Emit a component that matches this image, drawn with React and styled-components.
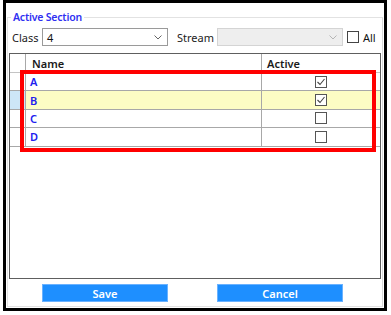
import React from "react";
import styled, { createGlobalStyle } from "styled-components";

const Global = createGlobalStyle`
  body {
    margin: 0;
    background: #fff;
    font-family: "Noto Sans", "Open Sans", sans-serif;
  }
`;

const Frame = styled.div`
  position: relative;
  box-sizing: border-box;
  width: 384px;
  height: 311px;
  margin-left: 3px;
  border: 3px solid #000;
  padding: 14px 1px 1px 1px;
  display: flex;
`;

const Group = styled.div`
  flex: 1;
  display: flex;
  flex-direction: column;
  border: 1px solid #e2e2e2;
  border-right-color: #d6d6d6;
`;

const Legend = styled.div`
  align-self: flex-start;
  margin: -8px 0 0 3px;
  padding: 0 2px;
  background: #fff;
  color: #3030f2;
  font-size: 10.5px;
  font-weight: 600;
  letter-spacing: -0.2px;
  line-height: 14px;
`;

const FilterRow = styled.div`
  display: flex;
  align-items: center;
  height: 18px;
  margin-top: 4px;
  padding-left: 4px;
`;

const Label = styled.span`
  font-size: 11px;
  color: #222;
  width: ${(p) => p.$w}px;
`;

const Select = styled.div`
  box-sizing: border-box;
  width: 126px;
  height: 18px;
  display: flex;
  align-items: center;
  justify-content: space-between;
  padding: 0 5px 0 4px;
  font-size: 11px;
  color: #111;
  background: ${(p) => (p.$disabled ? "#eeeeee" : "#fff")};
  border: 1px solid ${(p) => (p.$disabled ? "#d4d4d4" : "#9a9a9a")};
  margin-right: ${(p) => p.$mr || 0}px;
`;

const Chevron = ({ color }) => (
  <svg width="8" height="5" viewBox="0 0 8 5">
    <polyline points="0.5,0.5 4,4 7.5,0.5" fill="none" stroke={color} strokeWidth="1" />
  </svg>
);

const Box = styled.span`
  box-sizing: border-box;
  width: 12px;
  height: 12px;
  border: 1px solid ${(p) => p.$c || "#333"};
  background: #fff;
  display: inline-flex;
  align-items: center;
  justify-content: center;
`;

const AllLabel = styled.span`
  font-size: 11px;
  color: #111;
  margin-left: 4px;
`;

const Grid = styled.div`
  position: relative;
  margin: 7px 0 0 1px;
  width: 372px;
  height: 226px;
  box-sizing: border-box;
  border: 1px solid #5e5e5e;
  background: #fff;
  display: grid;
  grid-template-columns: 16px 236px 1fr;
  grid-template-rows: 19px;
  grid-auto-rows: 18.4px;
  align-content: start;
`;

const Cell = styled.div`
  display: flex;
  align-items: center;
  justify-content: ${(p) => (p.$center ? "center" : "flex-start")};
  padding-left: ${(p) => p.$pl || 0}px;
  font-size: 11px;
  border-bottom: 1px solid #a8a8a8;
  border-right: ${(p) => (p.$noRight ? "none" : "1px solid #a8a8a8")};
  background: ${(p) => p.$bg || "transparent"};
`;

const HeadCell = styled(Cell)`
  color: #1a1a1a;
  font-weight: 600;
  border-bottom-color: #c4c4c4;
`;

const RowText = styled.span`
  color: #2020f0;
  font-weight: 600;
`;

const Highlight = styled.div`
  position: absolute;
  left: 10px;
  top: 16px;
  width: 356px;
  height: 82px;
  box-sizing: border-box;
  border: 4px solid #ff0000;
  pointer-events: none;
`;

const ButtonRow = styled.div`
  display: flex;
  margin-top: 5px;
  padding-left: 34px;
  gap: 49px;
`;

const Button = styled.button`
  box-sizing: border-box;
  width: 126px;
  height: 18px;
  padding: 0;
  border: 1px solid #6ab2ff;
  background: #1e8fff;
  color: #fff;
  font-family: inherit;
  font-size: 11px;
  font-weight: 600;
`;

const Check = () => (
  <svg width="10" height="10" viewBox="0 0 10 10">
    <polyline points="1.5,5 4,7.5 8.5,2" fill="none" stroke="#444" strokeWidth="1.1" />
  </svg>
);

const rows = [
  { name: "A", active: true },
  { name: "B", active: true, selected: true },
  { name: "C", active: false },
  { name: "D", active: false },
];

export default function App() {
  return (
    <>
      <Global />
      <Frame>
        <Group>
          <Legend>Active Section</Legend>
          <FilterRow>
            <Label $w={30}>Class</Label>
            <Select $mr={9}>
              <span>4</span>
              <Chevron color="#666" />
            </Select>
            <Label $w={40}>Stream</Label>
            <Select $disabled $mr={4}>
              <span />
              <Chevron color="#b5b5b5" />
            </Select>
            <Box $c="#444" />
            <AllLabel>All</AllLabel>
          </FilterRow>
          <Grid>
            <HeadCell />
            <HeadCell $pl={6}>Name</HeadCell>
            <HeadCell $pl={5} $noRight>Active</HeadCell>
            {rows.map((r) => (
              <React.Fragment key={r.name}>
                <Cell $bg={r.selected ? "#cde6f7" : "transparent"} />
                <Cell $pl={4} $bg={r.selected ? "#fdfdc4" : "transparent"}>
                  <RowText>{r.name}</RowText>
                </Cell>
                <Cell $center $noRight $bg={r.selected ? "#fdfdc4" : "transparent"}>
                  <Box $c="#555">{r.active && <Check />}</Box>
                </Cell>
              </React.Fragment>
            ))}
            <Highlight />
          </Grid>
          <ButtonRow>
            <Button>Save</Button>
            <Button>Cancel</Button>
          </ButtonRow>
        </Group>
      </Frame>
    </>
  );
}
